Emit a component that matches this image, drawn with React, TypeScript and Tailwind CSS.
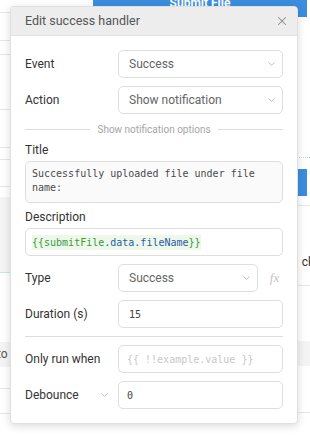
import { X } from "lucide-react";

const sans = "font-['Roboto',_'Liberation_Sans',_sans-serif]";
const mono = "font-['DejaVu_Sans_Mono',_'Liberation_Mono',_monospace]";

function Chevron() {
  return (
    <svg width="7" height="4" viewBox="0 0 7 4" fill="none">
      <path d="M0.75 0.75l2.75 2.5 2.75-2.5" stroke="#bcbcbc" strokeWidth="1" strokeLinecap="round" strokeLinejoin="round" />
    </svg>
  );
}

function Select({ value, className = "" }: { value: string; className?: string }) {
  return (
    <div
      className={`h-[28px] border border-[#dedede] rounded-[5px] bg-white flex items-center justify-between pl-[10px] pr-[7px] text-[12px] text-[#666] ${className}`}
    >
      <span>{value}</span>
      <Chevron />
    </div>
  );
}

function Row({ label, children }: { label: React.ReactNode; children: React.ReactNode }) {
  return (
    <div className="flex items-center">
      <div className="w-[93px] text-[12px] text-[#333]">{label}</div>
      <div className="flex-1 flex items-center">{children}</div>
    </div>
  );
}

// page behind the dialog, mostly covered
function Background() {
  return (
    <div className={`flex flex-col ${sans}`}>
      <div className="flex h-[17px]">
        <div className="w-[93px] h-[13px] border-b border-[#e6e6e6]" />
        <div className="flex-1 bg-[#3b8ede] text-white text-[12px] font-bold leading-[12px] flex justify-center">
          <span className="-mt-[3px]">Submit File</span>
        </div>
        <div className="w-[3px]" />
      </div>
      <div className="flex">
        <div className="w-[150px] flex flex-col">
          <div className="h-[24px] border-b border-[#e6e6e6]" />
          <div className="h-[14px] border-b border-[#e6e6e6]" />
          <div className="h-[55px] border-b border-[#e6e6e6]" />
          <div className="h-[38px] border-b border-[#e6e6e6]" />
          <div className="h-[12px] border-b border-[#e6e6e6]" />
          <div className="h-[27px] border-b border-[#e6e6e6]" />
          <div className="h-[10px]" />
          <div className="h-[76px] bg-[#f4f4f4] border-b border-[#cfe0f3]" />
          <div className="h-[69px]" />
          <div className="h-[25px] bg-[#f4f4f4] text-[12px] text-[#555] leading-[25px] -indent-[3px]">to</div>
          <div className="h-[22px] border-b border-[#e6e6e6]" />
          <div className="h-[25px] border-b border-[#e6e6e6]" />
        </div>
        <div className="flex-1 flex flex-col">
          <div className="h-[141px] border-b border-dotted border-[#b9d3ee]" />
          <div className="h-[11px]" />
          <div className="h-[27px] bg-[#3b8ede] mr-[3px]" />
          <div className="h-[10px] border-b border-[#e6e6e6]" />
          <div className="h-[80px] border-b border-[#e6e6e6] flex items-end justify-end pb-[14px] text-[12px] text-[#333]">
            <span className="-mr-[4px]">ck</span>
          </div>
          <div className="h-[55px]" />
          <div className="h-[25px] bg-[#f4f4f4]" />
          <div className="h-[47px] border-b border-[#e6e6e6]" />
        </div>
      </div>
    </div>
  );
}

export default function App() {
  return (
    <div className="relative w-[310px] h-[437px] overflow-hidden bg-white">
      <Background />

      <div
        className={`absolute left-[10px] top-[6px] w-[288px] bg-white rounded-[4px] border border-[#e0e0e0] shadow-[0_2px_8px_rgba(0,0,0,0.15)] overflow-hidden ${sans}`}
      >
        <div className="h-[29px] bg-[#ededed] border-b border-[#e2e2e2] flex items-center justify-between pl-[14px] pr-[8px]">
          <span className="text-[12.5px] text-[#555]">Edit success handler</span>
          <X size={14} color="#8a8a8a" strokeWidth={1.75} />
        </div>

        <div className="px-[14px] pt-[14px] pb-[14px] flex flex-col">
          <Row label="Event">
            <Select value="Success" className="flex-1" />
          </Row>
          <div className="mt-[8px]">
            <Row label="Action">
              <Select value="Show notification" className="flex-1" />
            </Row>
          </div>

          <div className="mt-[8px] flex items-center gap-[7px] text-[10px] text-[#a5a5a5]">
            <div className="flex-1 border-t border-[#dcdcdc]" />
            <span>Show notification options</span>
            <div className="flex-1 border-t border-[#dcdcdc]" />
          </div>

          <div className="mt-[5px] text-[12px] text-[#333] leading-[16px]">Title</div>
          <div
            className={`mt-[3px] h-[42px] border border-[#dedede] rounded-[5px] bg-[#fafafa] px-[6px] pt-[5px] text-[10px] leading-[14px] text-[#4a4a4a] ${mono}`}
          >
            Successfully uploaded file under file
            <br />
            name:
          </div>

          <div className="mt-[6px] text-[12px] text-[#333] leading-[16px]">Description</div>
          <div
            className={`mt-[3px] h-[28px] border border-[#dedede] rounded-[5px] bg-white px-[6px] flex items-center text-[10px] ${mono}`}
          >
            <span className="bg-[#eef8ea] leading-[15px]">
              <span className="text-[#3a9a3a]">{"{{submitFile"}</span>
              <span className="text-[#2c5aa8]">.data.fileName</span>
              <span className="text-[#3a9a3a]">{"}}"}</span>
            </span>
          </div>

          <div className="mt-[8px]">
            <Row label="Type">
              <Select value="Success" className="w-[140px]" />
              <span className="flex-1 pl-[8px] text-center text-[13px] italic text-[#c4c4c4] font-['Liberation_Serif',_serif]">
                fx
              </span>
            </Row>
          </div>

          <div className="mt-[8px]">
            <Row label="Duration (s)">
              <div
                className={`flex-1 h-[28px] border border-[#dedede] rounded-[5px] flex items-center pl-[10px] text-[10px] text-[#444] ${mono}`}
              >
                15
              </div>
            </Row>
          </div>

          <div className="mt-[8px] border-t border-[#dcdcdc]" />

          <div className="mt-[8px]">
            <Row label="Only run when">
              <div
                className={`flex-1 h-[28px] border border-[#dedede] rounded-[5px] flex items-center pl-[8px] text-[10px] text-[#c8c8c8] ${mono}`}
              >
                {"{{ !!example.value }}"}
              </div>
            </Row>
          </div>

          <div className="mt-[8px]">
            <Row
              label={
                <div className="flex items-center justify-between pr-[10px]">
                  <span>Debounce</span>
                  <Chevron />
                </div>
              }
            >
              <div
                className={`flex-1 h-[28px] border border-[#dedede] rounded-[5px] flex items-center pl-[8px] text-[10px] text-[#444] ${mono}`}
              >
                0
              </div>
            </Row>
          </div>
        </div>
      </div>
    </div>
  );
}
